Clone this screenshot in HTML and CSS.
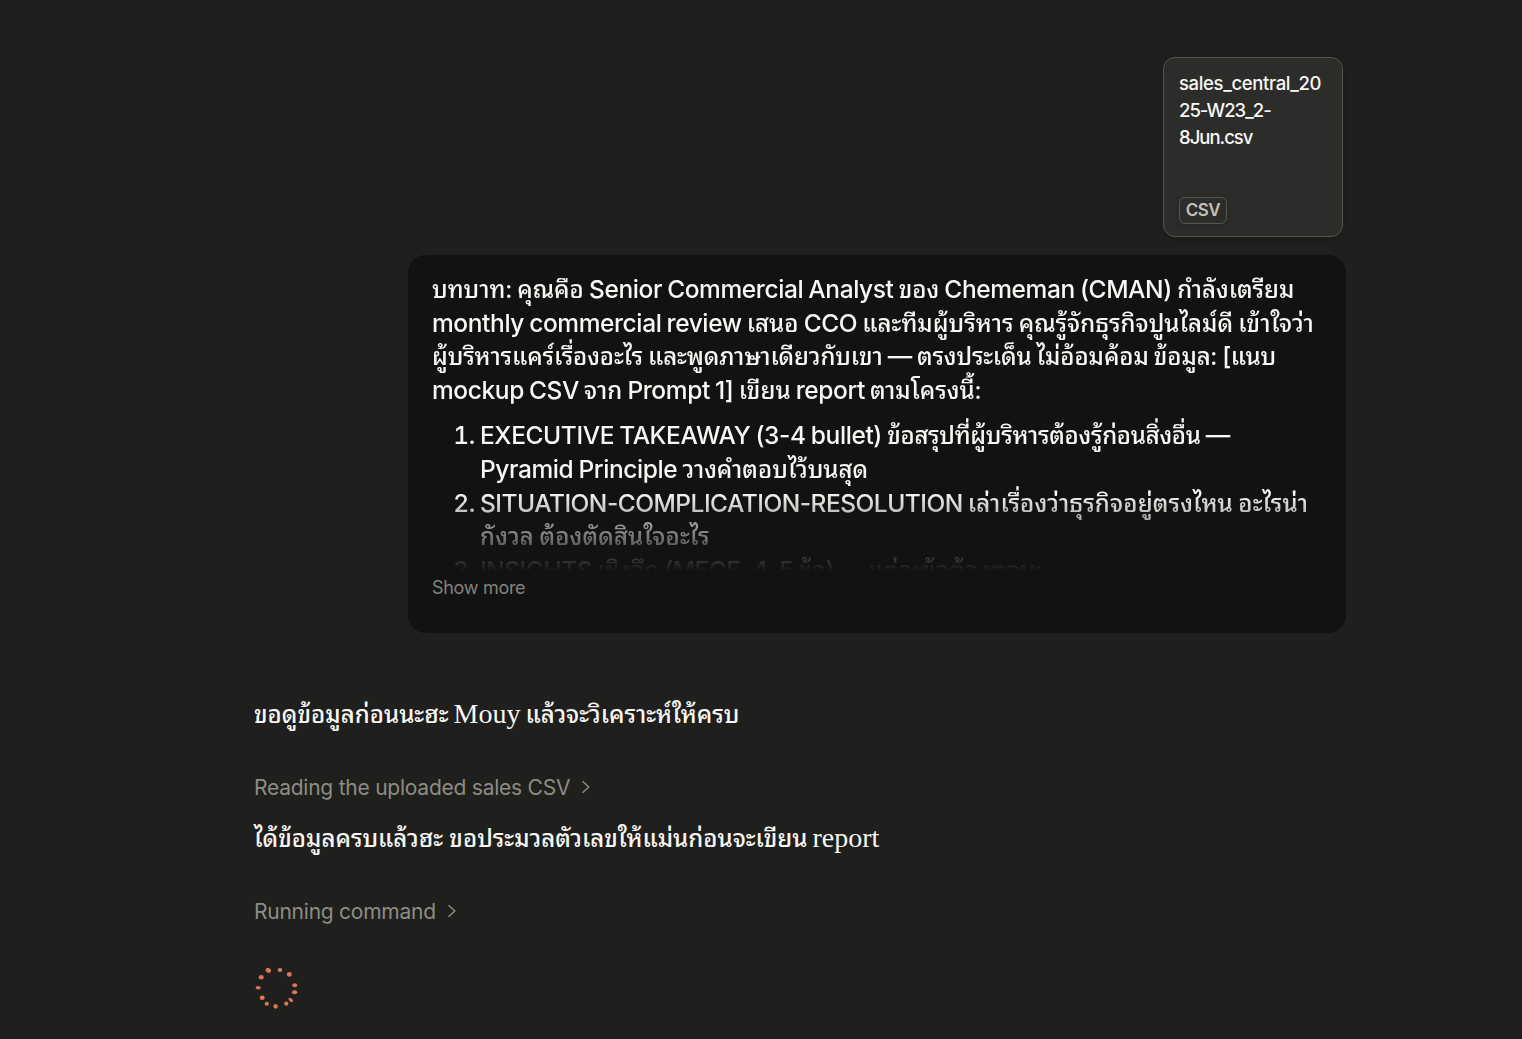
FILE: index.html
```
<!DOCTYPE html>
<html lang="th">
<head>
    <meta charset="UTF-8">
    <title>Chat</title>
    <link rel="stylesheet" href="styles.css">
</head>
<body>
<main>
    <!-- ไฟล์แนบ -->
    <div class="file">
        <p>sales_central_20<br><span>25-W23_2-<br>8Jun.csv</span></p>
        <span class="tag">CSV</span>
    </div>

    <!-- ข้อความผู้ใช้ -->
    <section class="bubble">
        <div class="message">
            <p>
                <span class="line"><i>บทบาท: คุณคือ</i> Senior Commercial Analyst <i>ของ</i> Chememan (CMAN) <i>กำลังเตรียม</i></span>
                <span class="line">monthly commercial review <i>เสนอ</i> CCO <i>และทีมผู้บริหาร คุณรู้จักธุรกิจปูนไลม์ดี เข้าใจว่า</i></span>
                <span class="line l3"><i>ผู้บริหารแคร์เรื่องอะไร และพูดภาษาเดียวกับเขา</i> — <i>ตรงประเด็น ไม่อ้อมค้อม ข้อมูล:</i> [<i>แนบ</i></span>
                <span class="line">mockup CSV <i>จาก</i> Prompt 1] <i>เขียน</i> report <i>ตามโครงนี้:</i></span>
            </p>
            <ol>
                <li>
                    <span class="line l5">EXECUTIVE TAKEAWAY (3-4 bullet) <i>ข้อสรุปที่ผู้บริหารต้องรู้ก่อนสิ่งอื่น</i> —</span>
                    <span class="line">Pyramid Principle <i>วางคำตอบไว้บนสุด</i></span>
                </li>
                <li>
                    <span class="line l7">SITUATION-COMPLICATION-RESOLUTION <i>เล่าเรื่องว่าธุรกิจอยู่ตรงไหน อะไรน่า</i></span>
                    <span class="line l8"><i>กังวล ต้องตัดสินใจอะไร</i></span>
                </li>
                <li>
                    <span class="line l9">INSIGHTS <i>เชิงลึก</i> (MECE, 4-5 <i>ข้อ</i>) — <i>แต่ละข้อต้องตอบ:</i></span>
                </li>
            </ol>
        </div>
        <button class="more">Show more</button>
    </section>

    <!-- คำตอบ -->
    <section class="reply">
        <p class="answer"><i>ขอดูข้อมูลก่อนนะฮะ</i> Mouy <i>แล้วจะวิเคราะห์ให้ครบ</i></p>
        <div class="step">
            <span>Reading the uploaded sales CSV</span>
            <svg width="10" height="14" viewBox="0 0 10 14"><path d="M1.5 1.2 7.8 7 1.5 12.8"/></svg>
        </div>
        <p class="answer second"><i>ได้ข้อมูลครบแล้วฮะ ขอประมวลตัวเลขให้แม่นก่อนจะเขียน</i> report</p>
        <div class="step">
            <span>Running command</span>
            <svg width="10" height="14" viewBox="0 0 10 14"><path d="M1.5 1.2 7.8 7 1.5 12.8"/></svg>
        </div>
        <svg class="spinner" width="48" height="48" viewBox="0 0 48 48">
            <ellipse cx="15.3" cy="6.3" rx="2.8" ry="2.3" transform="rotate(35 15.3 6.3)"/>
            <ellipse cx="27" cy="6" rx="2.4" ry="2.1"/>
            <ellipse cx="36.3" cy="10.4" rx="2.5" ry="2.3"/>
            <ellipse cx="8.2" cy="13.2" rx="2.5" ry="2.2"/>
            <ellipse cx="41.8" cy="21.2" rx="2.5" ry="2"/>
            <ellipse cx="5.2" cy="23.8" rx="2.6" ry="1.7"/>
            <ellipse cx="41.6" cy="28.2" rx="2.7" ry="2"/>
            <ellipse cx="9.2" cy="33.8" rx="2.5" ry="2.2"/>
            <ellipse cx="37.8" cy="36.1" rx="2.7" ry="1.6" transform="rotate(40 37.8 36.1)"/>
            <ellipse cx="13.8" cy="39.8" rx="2.1" ry="2"/>
            <ellipse cx="33.3" cy="39.6" rx="2.1" ry="2.2"/>
            <ellipse cx="22.6" cy="42.3" rx="2.2" ry="2.4"/>
        </svg>
    </section>
</main>
</body>
</html>
```
FILE: styles.css
```
* {
    margin: 0;
    padding: 0;
    box-sizing: border-box;
}

body {
    background: #1f1f1d;
    color: #f8f7f3;
    font-family: Inter, sans-serif;
    overflow: hidden;
}

/* ข้อความภาษาไทย */
i {
    font-family: "Noto Sans Thai Looped", "Noto Looped Thai", Loma, "Noto Sans Thai", sans-serif;
    font-size: 24px;
    font-style: normal;
    font-weight: 500;
    line-height: 1;
    letter-spacing: 0;
}

main {
    width: 1092px;
    margin-left: 254px;
    padding-top: 57px;
    display: flex;
    flex-direction: column;
}

.file {
    width: 180px;
    height: 180px;
    margin-right: 3px;
    padding: 12px 15px;
    align-self: flex-end;
    display: flex;
    flex-direction: column;
    justify-content: space-between;
    align-items: flex-start;
    background: #2c2c2a;
    border: 1px solid #555552;
    border-radius: 12px;
    box-shadow: 0 2px 8px rgba(0, 0, 0, .2);
}

.file p {
    font-size: 18.5px;
    line-height: 27px;
    font-weight: 500;
    letter-spacing: -.35px;
    white-space: nowrap;
}

.file p span {
    letter-spacing: -1px;
}

.tag {
    width: 48px;
    height: 27px;
    line-height: 25px;
    text-align: center;
    font-size: 17px;
    font-weight: 600;
    letter-spacing: -.5px;
    color: #c2c0b6;
    border: 1px solid #555552;
    border-radius: 6px;
    box-shadow: 0 2px 6px rgba(0, 0, 0, .15);
}

.bubble {
    width: 938px;
    height: 378px;
    margin-top: 18px;
    padding: 18px 24px;
    align-self: flex-end;
    background: #121212;
    border-radius: 18px;
}

.message {
    height: 297px;
    margin-bottom: 4px;
    overflow: hidden;
    font-size: 24.5px;
    font-weight: 450;
    line-height: 33.6px;
    letter-spacing: -.4px;
    word-spacing: -1px;
    -webkit-mask-image: linear-gradient(#000 220px, transparent 299px);
    mask-image: linear-gradient(#000 220px, transparent 299px);
}

.line {
    display: block;
    white-space: nowrap;
}

.l3 i {
    letter-spacing: -.12px;
}

.l5 i {
    letter-spacing: -.3px;
}

.l7 {
    letter-spacing: -.5px;
}

.l7 i,
.l8 i {
    letter-spacing: .15px;
}

.l9 {
    letter-spacing: -.5px;
}

.l9 i {
    letter-spacing: -.3px;
}

.message ol {
    margin-top: 12px;
    padding-left: 48px;
}

.more {
    display: block;
    background: none;
    border: 0;
    font: 18px/27px Inter, sans-serif;
    letter-spacing: -.3px;
    color: #83827b;
}

.reply {
    margin-top: 63px;
}

.answer {
    font-family: "Liberation Serif", serif;
    font-size: 28px;
    line-height: 36px;
    word-spacing: -2px;
    white-space: nowrap;
}

.answer i {
    word-spacing: 0;
}

.second {
    margin-top: 14px;
}

.step {
    height: 36px;
    margin-top: 37px;
    margin-bottom: 15px;
    display: flex;
    align-items: center;
    gap: 11px;
    font-size: 21px;
    letter-spacing: -.24px;
    color: #8e8c84;
}

.step svg {
    fill: none;
    stroke: #8e8c84;
    stroke-width: 1.4;
}

.spinner {
    display: block;
    margin-top: 35px;
    margin-left: -1px;
    fill: #d97757;
}
```
